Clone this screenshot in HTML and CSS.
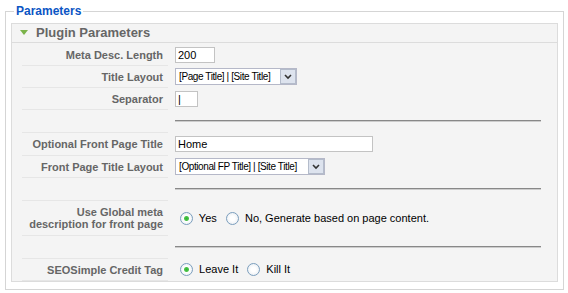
FILE: index.html
```html
<!DOCTYPE html>
<html lang="en">
<head>
    <meta charset="UTF-8">
    <title>Parameters</title>
    <link rel="stylesheet" href="styles.css">
</head>
<body>
    <fieldset class="adminform">
        <legend>Parameters</legend>

        <div class="panel">
            <h3 class="panel-title"><span class="arrow"></span>Plugin Parameters</h3>

            <table class="paramlist">
                <tr>
                    <td class="key">Meta Desc. Length</td>
                    <td class="value"><input type="text" class="text w-short" value="200"></td>
                </tr>
                <tr>
                    <td class="key">Title Layout</td>
                    <td class="value">
                        <select class="sel w-title">
                            <option>[Page Title] | [Site Title]</option>
                        </select>
                    </td>
                </tr>
                <tr>
                    <td class="key">Separator</td>
                    <td class="value"><input type="text" class="text w-sep" value="|"></td>
                </tr>
                <tr class="spacer">
                    <td class="key"></td>
                    <td class="value"><hr></td>
                </tr>
                <tr class="roomy">
                    <td class="key">Optional Front Page Title</td>
                    <td class="value"><input type="text" class="text w-long" value="Home"></td>
                </tr>
                <tr>
                    <td class="key">Front Page Title Layout</td>
                    <td class="value">
                        <select class="sel w-fp">
                            <option>[Optional FP Title] | [Site Title]</option>
                        </select>
                    </td>
                </tr>
                <tr class="spacer">
                    <td class="key"></td>
                    <td class="value"><hr></td>
                </tr>
                <tr class="tall">
                    <td class="key">Use Global meta description for front page</td>
                    <td class="value">
                        <label class="radio"><input type="radio" name="globalmeta" checked> Yes</label>
                        <label class="radio"><input type="radio" name="globalmeta"> No, Generate based on page content.</label>
                    </td>
                </tr>
                <tr class="spacer">
                    <td class="key"></td>
                    <td class="value"><hr></td>
                </tr>
                <tr>
                    <td class="key">SEOSimple Credit Tag</td>
                    <td class="value">
                        <label class="radio"><input type="radio" name="credit" checked> Leave It</label>
                        <label class="radio"><input type="radio" name="credit"> Kill It</label>
                    </td>
                </tr>
            </table>
        </div>
    </fieldset>
</body>
</html>
```

FILE: styles.css
```css
body {
    margin: 0;
    font-family: 'Liberation Sans', Arial, sans-serif;
    font-size: 11px;
    color: #333;
    background: #fff;
}
.adminform {
    margin: 0 4px 0 5px;
    padding: 1px 5px 7px 5px;
    border: 1px solid #d5d5d5;
}
.adminform legend {
    padding: 0 2px;
    margin-left: 3px;
    font-size: 12px;
    line-height: 22px;
    font-weight: bold;
    color: #0b55c4;
}
.panel {
    border: 1px solid #dcdcdc;
    background: #f4f4f4;
}
.panel-title {
    margin: 0;
    height: 18px;
    line-height: 18px;
    padding-left: 8px;
    font-size: 13px;
    font-weight: bold;
    color: #666;
    background: #f4f4f4;
    border-bottom: 1px solid #dcdcdc;
}
.arrow {
    display: inline-block;
    width: 0;
    height: 0;
    border-left: 4px solid transparent;
    border-right: 4px solid transparent;
    border-top: 5px solid #7bb34a;
    margin-right: 8px;
    vertical-align: 2px;
}
.paramlist {
    width: 525px;
    margin: 1px 10px 0 10px;
    border-collapse: collapse;
}
.paramlist td {
    padding: 2px 0;
    height: 17px;
}
.paramlist .key {
    width: 141px;
    padding-right: 5px;
    text-align: right;
    font-weight: bold;
    color: #666;
    border-bottom: 1px solid #e6e6e6;
}
.paramlist .value {
    padding-left: 7px;
    padding-right: 6px;
}
.paramlist .roomy td {
    height: 18px;
}
.paramlist .tall td {
    height: 30px;
}
.paramlist .spacer td {
    height: 18px;
}
hr {
    margin: 0;
    height: 0;
    border: 0;
    border-top: 1px solid #888;
    border-bottom: 1px solid #ccc;
}
.text {
    box-sizing: border-box;
    height: 16px;
    margin: 0;
    padding: 0 2px;
    border: 1px solid #c3c3c3;
    background: #fff;
    font-family: inherit;
    font-size: 11px;
    color: #000;
    vertical-align: middle;
}
.w-short { width: 40px; }
.w-sep { width: 23px; }
.w-long { width: 198px; }
.sel {
    box-sizing: border-box;
    -webkit-appearance: none;
    appearance: none;
    height: 17px;
    margin: 0;
    padding: 0 18px 0 3px;
    border: 1px solid #b5b8c8;
    font-family: inherit;
    font-size: 10px;
    letter-spacing: -0.4px;
    color: #000;
    vertical-align: middle;
    background: #fff url("data:image/svg+xml,%3Csvg xmlns='http://www.w3.org/2000/svg' width='16' height='15'%3E%3Crect x='0.5' y='0.5' width='15' height='14' fill='%23dde3ee' stroke='%23b4bccb'/%3E%3Cpath d='M5 6l3 3 3-3' fill='none' stroke='%23333' stroke-width='1.6'/%3E%3C/svg%3E") no-repeat right 0 center;
}
.w-title { width: 122px; }
.w-fp { width: 150px; }
.radio {
    margin-right: 1px;
    color: #000;
}
.radio input {
    -webkit-appearance: none;
    appearance: none;
    width: 13px;
    height: 13px;
    margin: 0 3px 0 5px;
    border: 1px solid #7b9ebd;
    border-radius: 50%;
    background: radial-gradient(circle, #fff 30%, #e3e8ee 100%);
    vertical-align: -3px;
}
.radio input:checked {
    background: radial-gradient(circle, #2fb52f 0, #4cc24c 2px, #fff 3px, #e3e8ee 100%);
}
```
